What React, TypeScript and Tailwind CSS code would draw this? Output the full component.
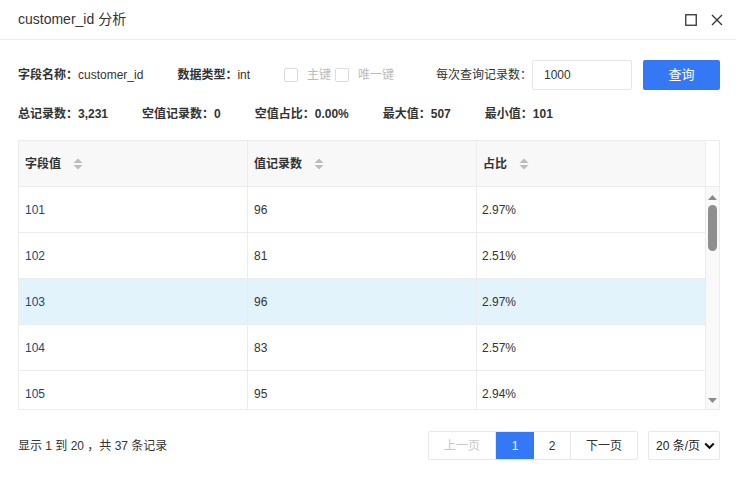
import React from 'react';

const rows = [
  { v: '101', c: '96', p: '2.97%' },
  { v: '102', c: '81', p: '2.51%' },
  { v: '103', c: '96', p: '2.97%' },
  { v: '104', c: '83', p: '2.57%' },
  { v: '105', c: '95', p: '2.94%' },
];

const SortIcon = () => (
  <svg width="10" height="12" viewBox="0 0 10 12" className="ml-[12px]">
    <path d="M5 0.5 L9.5 5 L0.5 5 Z" fill="#bdbdbd" />
    <path d="M5 11.5 L9.5 7 L0.5 7 Z" fill="#bdbdbd" />
  </svg>
);

const Checkbox = () => (
  <span className="inline-block w-[14px] h-[14px] border border-[#dcdcdc] rounded-[2px] bg-white" />
);

const App: React.FC = () => {
  return (
    <div
      className="w-[736px] h-[481px] bg-white text-[#333] flex flex-col overflow-hidden"
      style={{ fontFamily: '"Liberation Sans", "Noto Sans CJK SC", sans-serif' }}
    >
      {/* header */}
      <header className="h-[40px] shrink-0 border-b border-[#ececec] flex items-center pl-[18px] pr-[13px]">
        <h1 className="text-[14px] text-[#333]">customer_id 分析</h1>
        <div className="ml-auto flex items-center gap-[14px]">
          <svg width="12" height="12" viewBox="0 0 12 12">
            <rect x="0.75" y="0.75" width="10.5" height="10.5" fill="none" stroke="#333" strokeWidth="1.3" />
          </svg>
          <svg width="12" height="12" viewBox="0 0 12 12">
            <path d="M1 1 L11 11 M11 1 L1 11" stroke="#333" strokeWidth="1.3" />
          </svg>
        </div>
      </header>

      <main className="flex-1 pl-[18px] pr-[16px] pt-[20px] flex flex-col">
        {/* query row */}
        <div className="h-[30px] flex items-center text-[12px]">
          <span className="font-bold">字段名称：</span>
          <span>customer_id</span>
          <span className="font-bold ml-[34px]">数据类型：</span>
          <span>int</span>
          <span className="ml-[34px] flex items-center">
            <Checkbox />
            <span className="ml-[9px] text-[#bbb]">主键</span>
          </span>
          <span className="ml-[4px] flex items-center">
            <Checkbox />
            <span className="ml-[9px] text-[#bbb]">唯一键</span>
          </span>
          <div className="ml-auto flex items-center">
            <span>每次查询记录数：</span>
            <input
              readOnly
              value="1000"
              className="w-[100px] h-[30px] border border-[#e6e6e6] rounded-[2px] px-[11px] text-[12px] text-[#333] outline-none"
            />
            <button className="ml-[11px] w-[77px] h-[30px] rounded-[2px] bg-[#3478f6] text-white text-[13px]">
              查询
            </button>
          </div>
        </div>

        {/* stats row */}
        <div className="mt-[14px] h-[20px] flex items-center gap-[34px] text-[12px] font-bold">
          <span>总记录数：3,231</span>
          <span>空值记录数：0</span>
          <span>空值占比：0.00%</span>
          <span>最大值：507</span>
          <span>最小值：101</span>
        </div>

        {/* table */}
        <div className="mt-[16px] h-[270px] border border-[#ececec] flex flex-col text-[12px]">
          <div className="h-[46px] shrink-0 grid grid-cols-[229px_229px_229px_1fr] border-b border-[#ececec]">
            {['字段值', '值记录数', '占比'].map((h) => (
              <div key={h} className="bg-[#f8f8f8] border-r border-[#ececec] flex items-center pl-[6px] font-bold">
                {h}
                <SortIcon />
              </div>
            ))}
            <div className="bg-white" />
          </div>
          <div className="flex-1 flex overflow-hidden">
            <div className="w-[687px] shrink-0">
              {rows.map((r, i) => (
                <div
                  key={r.v}
                  className={`h-[46px] grid grid-cols-[229px_229px_229px] border-b border-[#ececec] ${i === 2 ? 'bg-[#e3f3fc]' : 'bg-white'}`}
                >
                  <div className="border-r border-[#ececec] flex items-center pl-[6px] text-[#24457a]">{r.v}</div>
                  <div className="border-r border-[#ececec] flex items-center pl-[6px]">{r.c}</div>
                  <div className="border-r border-[#ececec] flex items-center pl-[5px]">{r.p}</div>
                </div>
              ))}
            </div>
            <div className="flex-1 bg-[#f9f9f9] flex flex-col items-center pt-[8px] pb-[6px]">
              <svg width="9" height="5" viewBox="0 0 9 5">
                <path d="M4.5 0 L9 5 L0 5 Z" fill="#8a8a8a" />
              </svg>
              <div className="mt-[5px] w-[9px] h-[46px] rounded-full bg-[#8f8f8f]" />
              <svg width="9" height="5" viewBox="0 0 9 5" className="mt-auto">
                <path d="M0 0 L9 0 L4.5 5 Z" fill="#8a8a8a" />
              </svg>
            </div>
          </div>
        </div>

        {/* footer */}
        <div className="mt-[21px] h-[29px] flex items-center text-[12px]">
          <span>显示 1 到 20 ，共 37 条记录</span>
          <div className="ml-auto flex items-center">
            <div className="flex h-[29px] border border-[#e8e8e8] rounded-[2px]">
              <span className="w-[67px] flex items-center justify-center text-[#c8c8c8] border-r border-[#e8e8e8]">上一页</span>
              <span className="w-[38px] flex items-center justify-center bg-[#3478f6] text-white">1</span>
              <span className="w-[37px] flex items-center justify-center border-r border-[#e8e8e8]">2</span>
              <span className="w-[66px] flex items-center justify-center">下一页</span>
            </div>
            <div className="ml-[10px] w-[72px] h-[29px] border border-[#e8e8e8] rounded-[2px] flex items-center pl-[7px] pr-[4px] text-[12px] text-[#222] whitespace-nowrap">
              <span>20 条/页</span>
              <svg width="11" height="8" viewBox="0 0 11 8" className="ml-auto shrink-0">
                <path d="M1.2 1.5 L5.5 5.8 L9.8 1.5" fill="none" stroke="#111" strokeWidth="2.2" />
              </svg>
            </div>
          </div>
        </div>
      </main>
    </div>
  );
};

export default App;
